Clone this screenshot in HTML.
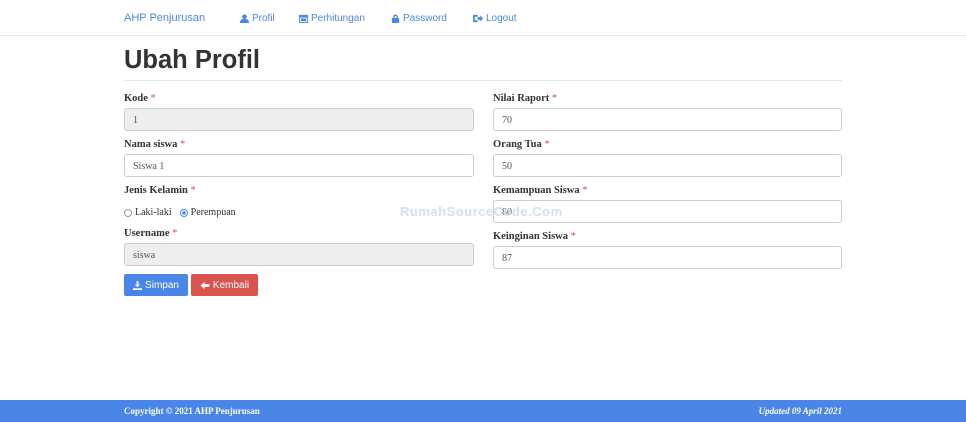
<!DOCTYPE html>
<html><head><meta charset="utf-8"><style>
*{box-sizing:border-box;margin:0;padding:0}
body{width:966px;height:422px;background:#fff;font-family:"Liberation Serif",serif;color:#333;position:relative;overflow:hidden}
.nav{height:36px;border-bottom:1px solid #e7e7e7;position:relative;font-family:"Liberation Sans",sans-serif;font-size:10px;color:#4a86e8}
.nav span{position:absolute;top:13px;display:flex;align-items:center;gap:3px}
.nav svg{fill:#4a86e8}
h1{position:absolute;left:124px;top:46px;font-family:"Liberation Sans",sans-serif;font-size:25.5px;font-weight:bold;color:#333}
.hr{position:absolute;left:124px;top:80px;width:718px;border-top:1px solid #e5e5e5}
.lbl{position:absolute;font-size:10.5px;font-weight:bold;color:#333}
.lbl i{color:#d9534f;font-style:normal;font-weight:normal}
.in{position:absolute;height:23px;border:1px solid #ccc;border-radius:3px;font-size:10px;padding:6px 8px;color:#555}
.ro{background:#eee}
.btn{position:absolute;top:274px;height:22px;border-radius:2px;color:#fff;font-family:"Liberation Sans",sans-serif;font-size:10px;display:flex;align-items:center;justify-content:center;gap:3px}
.foot{position:absolute;left:0;top:400px;width:966px;height:22px;background:#4a86e8;color:#fff;font-size:9px;font-weight:bold}
</style></head><body>
<div class="nav">
<span style="left:124px;font-size:11px;top:12px">AHP Penjurusan</span>
<span style="left:240px"><svg width="9" height="9" viewBox="0 0 10 10"><circle cx="5" cy="3" r="2.6"/><path d="M0 10C0 6 2 5.5 5 5.5S10 6 10 10Z"/></svg>Profil</span>
<span style="left:299px"><svg width="9" height="9" viewBox="0 0 10 10"><path d="M0 1h10v9H0Z M1 4v5h8V4Z"/><rect x="2" y="5" width="6" height="3"/></svg>Perhitungan</span>
<span style="left:391px"><svg width="9" height="9" viewBox="0 0 10 10"><path d="M1 4.5h8V10H1Z M2.5 4.5V3a2.5 2.5 0 0 1 5 0v1.5H6V3a1 1 0 0 0-2 0v1.5Z"/></svg>Password</span>
<span style="left:473px"><svg width="10" height="9" viewBox="0 0 11 10"><path d="M0 1h5v2H2v4h3v2H0Z M5 3.5h3V1.5L11 5 8 8.5v-2H5Z"/></svg>Logout</span>
</div>
<h1>Ubah Profil</h1>
<div class="hr"></div>

<div class="lbl" style="left:124px;top:93px">Kode <i>*</i></div>
<div class="in ro" style="left:124px;top:108px;width:350px">1</div>
<div class="lbl" style="left:124px;top:139px">Nama siswa <i>*</i></div>
<div class="in" style="left:124px;top:154px;width:350px">Siswa 1</div>
<div class="lbl" style="left:124px;top:185px">Jenis Kelamin <i>*</i></div>
<div style="position:absolute;left:124px;top:207px;font-size:10px;display:flex;align-items:center;gap:3px">
<span style="width:8px;height:8px;border:1px solid #999;border-radius:50%;display:inline-block"></span>Laki-laki
<span style="width:8px;height:8px;border:1px solid #4a86e8;border-radius:50%;display:inline-block;margin-left:5px;background:radial-gradient(#4a86e8 40%,#fff 45%)"></span>Perempuan</div>
<div class="lbl" style="left:124px;top:228px">Username <i>*</i></div>
<div class="in ro" style="left:124px;top:243px;width:350px">siswa</div>

<div class="lbl" style="left:493px;top:93px">Nilai Raport <i>*</i></div>
<div class="in" style="left:493px;top:108px;width:349px">70</div>
<div class="lbl" style="left:493px;top:139px">Orang Tua <i>*</i></div>
<div class="in" style="left:493px;top:154px;width:349px">50</div>
<div class="lbl" style="left:493px;top:185px">Kemampuan Siswa <i>*</i></div>
<div class="in" style="left:493px;top:200px;width:349px">80</div>
<div class="lbl" style="left:493px;top:231px">Keinginan Siswa <i>*</i></div>
<div class="in" style="left:493px;top:246px;width:349px">87</div>

<div style="position:absolute;left:400px;top:204px;font-family:'Liberation Sans',sans-serif;font-weight:bold;font-size:13px;color:#cfe0f8;letter-spacing:0.5px">RumahSourceCode.Com</div>

<div class="btn" style="left:124px;width:64px;background:#4a86e8"><svg width="9" height="9" viewBox="0 0 10 10" fill="#fff"><path d="M4 0h2v4h2L5 7 2 4h2Z M0 8h10v2H0Z"/></svg>Simpan</div>
<div class="btn" style="left:191px;width:67px;background:#d9534f"><svg width="10" height="9" viewBox="0 0 10 10" fill="#fff"><path d="M0 5 4.5 1v2.5H10v3H4.5V9Z"/></svg>Kembali</div>

<div class="foot"><span style="position:absolute;left:124px;top:6px">Copyright © 2021 AHP Penjurusan</span><span style="position:absolute;right:124px;top:6px;font-style:italic">Updated 09 April 2021</span></div>
</body></html>
